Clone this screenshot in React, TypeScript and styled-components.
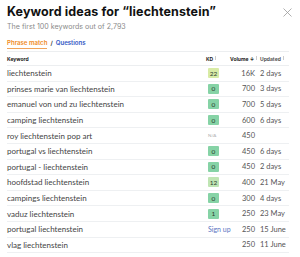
import React from 'react';
import styled, { createGlobalStyle } from 'styled-components';

const GlobalStyle = createGlobalStyle`
  html, body {
    margin: 0;
    padding: 0;
    background: #ffffff;
  }
  body {
    font-family: Lato, "Noto Sans", sans-serif;
    color: #333;
  }
`;

type Row = {
  keyword: string;
  kd: number | 'na' | 'signup' | null;
  volume: string;
  updated: string;
};

const ROWS: Row[] = [
  { keyword: 'liechtenstein', kd: 22, volume: '16K', updated: '2 days' },
  { keyword: 'prinses marie van liechtenstein', kd: 0, volume: '700', updated: '3 days' },
  { keyword: 'emanuel von und zu liechtenstein', kd: 0, volume: '700', updated: '5 days' },
  { keyword: 'camping liechtenstein', kd: 0, volume: '600', updated: '6 days' },
  { keyword: 'roy liechtenstein pop art', kd: 'na', volume: '450', updated: '' },
  { keyword: 'portugal vs liechtenstein', kd: 0, volume: '450', updated: '6 days' },
  { keyword: 'portugal - liechtenstein', kd: 0, volume: '450', updated: '2 days' },
  { keyword: 'hoofdstad liechtenstein', kd: 12, volume: '400', updated: '21 May' },
  { keyword: 'campings liechtenstein', kd: 0, volume: '300', updated: '4 days' },
  { keyword: 'vaduz liechtenstein', kd: 1, volume: '250', updated: '23 May' },
  { keyword: 'portugal liechtenstein', kd: 'signup', volume: '250', updated: '15 June' },
  { keyword: 'vlag liechtenstein', kd: null, volume: '250', updated: '11 June' },
];

const Panel = styled.div`
  width: 300px;
  height: 257px;
  box-sizing: border-box;
  padding: 4px 11px 0 7px;
  overflow: hidden;
`;

const Header = styled.div`
  display: flex;
  justify-content: space-between;
  align-items: flex-start;
`;

const Title = styled.h1`
  margin: 0;
  font-family: Inter, "Noto Sans", sans-serif;
  font-size: 12.5px;
  line-height: 16px;
  font-weight: 700;
  color: #111;
  letter-spacing: 0.1px;
`;

const Close = styled.button`
  border: 0;
  background: none;
  padding: 0;
  margin: 4px -3px 0 0;
  width: 9px;
  height: 9px;
  display: flex;
  cursor: pointer;
`;

const Subtitle = styled.div`
  margin-top: 2px;
  font-family: Inter, "Noto Sans", sans-serif;
  font-size: 7.1px;
  line-height: 9px;
  color: #8a8a8a;
`;

const Tabs = styled.div`
  margin-top: 8px;
  display: flex;
  align-items: flex-end;
  gap: 3px;
  font-family: Inter, "Noto Sans", sans-serif;
  font-size: 6.1px;
  line-height: 8px;
  font-weight: 600;
  border-bottom: 1px solid #eceef0;
`;

const Tab = styled.span<{ $active?: boolean }>`
  color: ${({ $active }) => ($active ? '#ef8a23' : '#2f56c4')};
  padding-bottom: 1px;
  border-bottom: 1px solid ${({ $active }) => ($active ? '#f0a35a' : 'transparent')};
  margin-bottom: 2px;
`;

const Slash = styled.span`
  color: #333;
  padding-bottom: 4px;
`;

const Grid = styled.div`
  display: grid;
  grid-template-columns: 199px 24px 25px 34px;
`;

const HeadRow = styled(Grid)`
  height: 14px;
  box-sizing: border-box;
  align-items: center;
  border-bottom: 1px solid #eceef0;
  font-family: Inter, "Noto Sans", sans-serif;
  font-size: 5px;
  font-weight: 700;
  color: #222;
`;

const HeadCell = styled.div<{ $right?: boolean }>`
  text-align: ${({ $right }) => ($right ? 'right' : 'left')};
  white-space: nowrap;
`;

const Info = styled.span`
  display: inline-block;
  width: 0.5px;
  height: 4px;
  margin-left: 2px;
  background: #ccc;
  vertical-align: top;
`;

const BodyRow = styled(Grid)`
  height: 15.6px;
  box-sizing: border-box;
  align-items: center;
  border-bottom: 1px solid #eef0f2;
  font-size: 7.5px;
  color: #444;
`;

const Keyword = styled.div`
  white-space: nowrap;
  font-size: 8px;
  color: #444;
`;

const KdCell = styled.div`
  display: flex;
  align-items: center;
  padding-left: 2px;
`;

const kdColor = (kd: number) => {
  if (kd >= 20) return '#d8eba6';
  if (kd >= 10) return '#bfe5b3';
  return '#86d3a6';
};

const Badge = styled.span<{ $kd: number }>`
  display: inline-flex;
  justify-content: center;
  align-items: center;
  min-width: 11px;
  height: 10px;
  box-sizing: border-box;
  padding: 0 1px;
  border-radius: 1px;
  background: ${({ $kd }) => kdColor($kd)};
  color: #2b3a2f;
  font-size: 6.5px;
`;

const NA = styled.span`
  font-size: 4.5px;
  color: #aaa;
`;

const SignUp = styled.span`
  font-size: 7px;
  color: #5a74bf;
  white-space: nowrap;
`;

const Volume = styled.div`
  text-align: right;
  color: #555;
`;

const Updated = styled.div`
  padding-left: 5px;
  white-space: nowrap;
  color: #555;
`;

const renderKd = (kd: Row['kd']) => {
  if (kd === null) return null;
  if (kd === 'na') return <NA>N/A</NA>;
  if (kd === 'signup') return <SignUp>Sign up</SignUp>;
  return <Badge $kd={kd}>{kd}</Badge>;
};

export default function App() {
  return (
    <>
      <GlobalStyle />
      <Panel>
        <Header>
          <Title>Keyword ideas for “liechtenstein”</Title>
          <Close aria-label="Close">
            <svg width="9" height="9" viewBox="0 0 9 9">
              <path d="M0.5 0.5 L8.5 8.5 M8.5 0.5 L0.5 8.5" stroke="#9a9a9a" strokeWidth="0.8" />
            </svg>
          </Close>
        </Header>
        <Subtitle>The first 100 keywords out of 2,793</Subtitle>
        <Tabs>
          <Tab $active>Phrase match</Tab>
          <Slash>/</Slash>
          <Tab>Questions</Tab>
        </Tabs>
        <HeadRow>
          <HeadCell>Keyword</HeadCell>
          <HeadCell>KD<Info /></HeadCell>
          <HeadCell $right>Volume ↓<Info /></HeadCell>
          <Updated>Updated<Info /></Updated>
        </HeadRow>
        {ROWS.map((r) => (
          <BodyRow key={r.keyword}>
            <Keyword>{r.keyword}</Keyword>
            <KdCell>{renderKd(r.kd)}</KdCell>
            <Volume>{r.volume}</Volume>
            <Updated>{r.updated}</Updated>
          </BodyRow>
        ))}
      </Panel>
    </>
  );
}
